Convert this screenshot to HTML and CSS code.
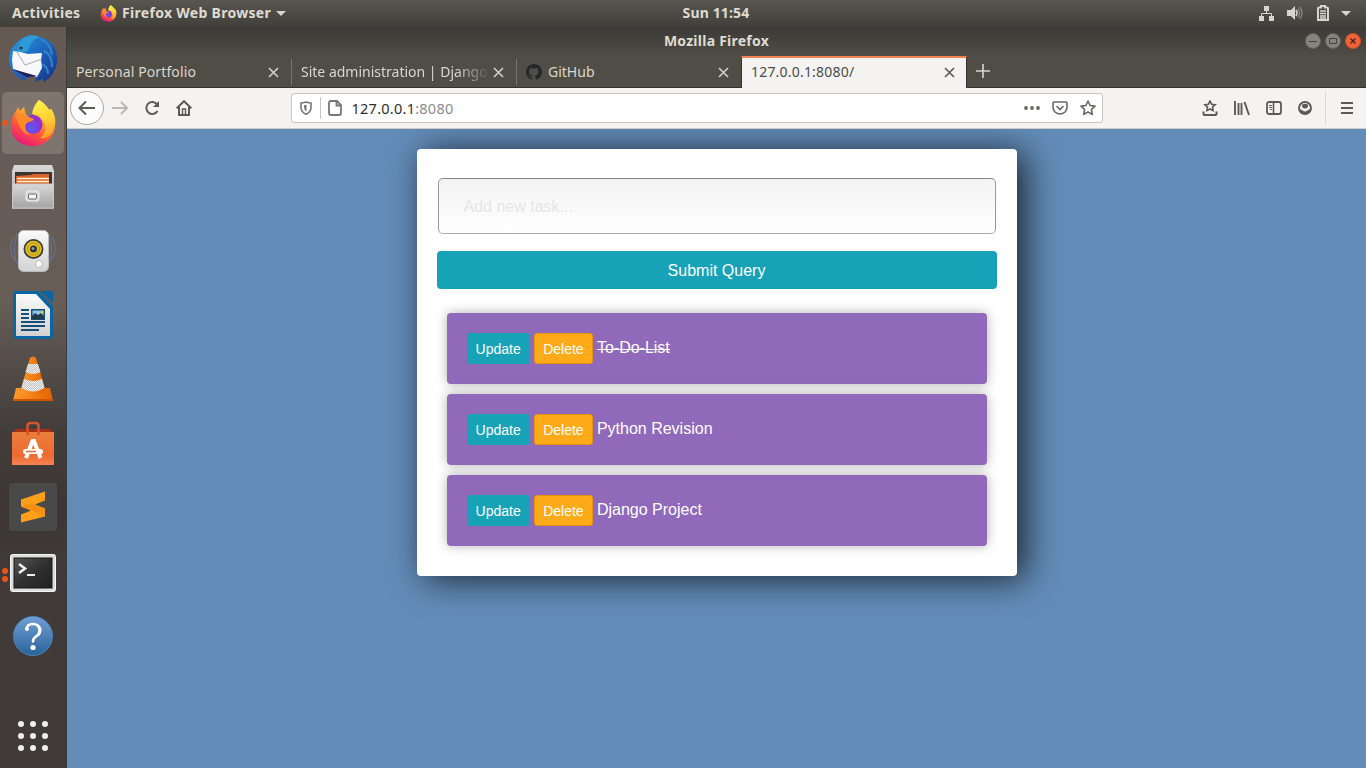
FILE: index.html
```html
<!DOCTYPE html>
<html lang="en">
<head>
<meta charset="utf-8">
<title>To-Do List</title>
<link rel="stylesheet" href="styles.css">
</head>
<body>
<svg class="defs" width="0" height="0">
  <defs>
    <linearGradient id="flame" x1=".8" y1="0" x2=".3" y2="1"><stop offset="0" stop-color="#fff44f"/><stop offset=".35" stop-color="#ffb52a"/><stop offset=".65" stop-color="#ff5a36"/><stop offset="1" stop-color="#e9157c"/></linearGradient>
    <linearGradient id="tail" x1=".4" y1="0" x2=".6" y2="1"><stop offset="0" stop-color="#fff04c"/><stop offset=".5" stop-color="#ffd335"/><stop offset="1" stop-color="#ff9a2a"/></linearGradient>
    <radialGradient id="globe" cx=".4" cy=".7"><stop offset="0" stop-color="#5a5cf0"/><stop offset="1" stop-color="#8b32d8"/></radialGradient>
    <linearGradient id="bird" x1="0" y1="0" x2="1" y2="1"><stop offset="0" stop-color="#2ba0e0"/><stop offset=".5" stop-color="#1c67be"/><stop offset="1" stop-color="#172c82"/></linearGradient>
    <linearGradient id="metal" x2="0" y2="1"><stop stop-color="#d8d8d8"/><stop offset="1" stop-color="#a4a4a4"/></linearGradient>
    <linearGradient id="white" x2="0" y2="1"><stop stop-color="#fafafa"/><stop offset="1" stop-color="#d2d2d2"/></linearGradient>
    <linearGradient id="cone" x2="1" y2="0"><stop stop-color="#ff9a2c"/><stop offset="1" stop-color="#e56400"/></linearGradient>
    <linearGradient id="bag" x2="0" y2="1"><stop stop-color="#eb7e3d"/><stop offset=".7" stop-color="#ee6a30"/><stop offset="1" stop-color="#f48355"/></linearGradient>
    <linearGradient id="screen" x2="1" y2="1"><stop stop-color="#555"/><stop offset=".5" stop-color="#303030"/><stop offset="1" stop-color="#202020"/></linearGradient>
    <linearGradient id="help" x2="0" y2="1"><stop stop-color="#729fd6"/><stop offset="1" stop-color="#286399"/></linearGradient>
    <pattern id="check" width="2" height="2" patternUnits="userSpaceOnUse"><rect width="2" height="2" fill="#eee"/><path d="M0 0h1v1H0zM1 1h1v1H1z" fill="#c4c4c4"/></pattern>
    <symbol id="firefox" viewBox="0 0 46 48">
      <path d="M29 1c5 3 8 6 10 10l2-1c4 5 5 11 4 17-1 12-10 20-22 20C10 47 1 39 1 27c0-6 2-11 5-15l2-4 2 4 4-4 2 8 7 3c1-8 1-12 6-18z" fill="url(#flame)"/>
      <path d="M22 15c1-6 3-10 7-14 5 3 8 6 10 10l2-1c5 8 5 18-1 26-3 3-8 4-10 3 6-4 7-12 3-18-3-4-6-6-11-6z" fill="url(#tail)"/>
      <circle cx="23" cy="25.500" r="9.500" fill="url(#globe)"/>
      <path d="M6 17c4-2 9-1 13 1l5 2c-1 3-6 2-8 5-2 4 0 8 5 11-8 0-13-9-15-19z" fill="#ff8a28"/>
    </symbol>
  </defs>
</svg>

<header class="topbar">
  <span class="activities">Activities</span>
  <span class="appmenu"><svg width="17" height="17"><use href="#firefox"/></svg><span class="appname">Firefox Web Browser</span><i class="caret"></i></span>
  <span class="clock">Sun 11:54</span>
  <span class="tray">
    <svg width="16" height="16" fill="#d4d4d0"><path d="M5 1h5v5H5zM0 11h5v5H0zM10 11h5v5h-5z"/><path d="M7.500 6v3M2.500 11V8.500h10V11" fill="none" stroke="#d4d4d0"/></svg>
    <svg width="16" height="16" fill="#d4d4d0"><path d="M0 5h4l4-4v14l-4-4H0z"/><path d="M9 5q2 3 0 6" fill="none" stroke="#d4d4d0" stroke-width="1.500"/><path d="M11 3.500q3 4.500 0 9M13 2q4 6 0 12" fill="none" stroke="#84837c" stroke-width="1.400"/></svg>
    <svg width="12" height="16"><path d="M4 1h4v1.500h2q1 0 1 1V15H1V3.500q0-1 1-1h2z" fill="none" stroke="#d4d4d0" stroke-width="2"/><path d="M3 6h6M3 8.500h6M3 11h6M3 13h6" stroke="#d4d4d0" stroke-width="1.300"/></svg>
    <i class="caret"></i>
  </span>
</header>

<div class="desktop">
  <nav class="dock">
    <div class="slot"><svg width="50" height="50" viewBox="0 0 50 50"><path d="M15 4Q22-1 32 3Q47 6 49 23Q50 39 36 48l-1-3-8 3 2-6-11 2-1 3Q3 41 1 27 0 13 15 4z" fill="url(#bird)"/><path d="M15 4Q22-1 32 3 23 5 20 17L11 19 9 14z" fill="#2d9bd6"/><path d="M33 5q10 5 11 16M36 17q8 3 8 16M33 30q7 2 7 10" fill="none" stroke="#3584c8" stroke-width="2"/><path d="M5 17l7 1 8 2 14-1-1 7 1 8-5 9-24-8-1-9z" fill="#f8f8fa"/><path d="M9 18l8 13 17-6" fill="none" stroke="#aaa"/><path d="M4 35l25 7-10 1z" fill="#272058"/><circle cx="13" cy="14" r="1.600" fill="#37322b"/></svg></div>
    <div class="slot active"><i class="run"></i><svg width="46" height="48"><use href="#firefox"/></svg></div>
    <div class="slot"><svg width="44" height="46"><path d="M3 1h38l2 6v38H1V7z" fill="url(#metal)"/><path d="M4 8h37v13H4z" fill="#3d3430"/><path d="M5 12l15-1 2-1h16v12H5z" fill="#d9652b"/><path d="M6 14.500h32M6 17.500h32" stroke="#fff1cf" stroke-width="1.500"/><path d="M1.500 20h41v24h-41z" fill="url(#metal)" stroke="#c9c9c9"/><rect x="15" y="27" width="13" height="10" rx="2" fill="#d8d8d8" stroke="#eee"/><rect x="17.500" y="30" width="8" height="5" rx="1" fill="#f8f8f8" stroke="#666"/></svg></div>
    <div class="slot"><svg width="48" height="44"><path d="M5 8q-7 12 1 24M8 5q-5 15 0 30M43 8q7 12-1 24M40 5q5 15 0 30" fill="none" stroke="#67708a" stroke-width="1.200"/><rect x="9.500" y="1.500" width="30" height="41" rx="5" fill="url(#white)" stroke="#bbb"/><circle cx="24.500" cy="20" r="10" fill="#3a3c3e"/><circle cx="24.500" cy="20" r="8.300" fill="#e0bd20"/><circle cx="24.500" cy="20" r="6" fill="none" stroke="#b49310"/><circle cx="24.500" cy="20" r="3.500" fill="#34383b"/><circle cx="24" cy="19.500" r="1.300" fill="#aaa"/><circle cx="30" cy="35" r="3.500" fill="#fff" stroke="#bbb"/></svg></div>
    <div class="slot"><svg width="42" height="50"><path d="M4 1h22l15 15v29q0 4-4 4H5q-4 0-4-4V4q0-3 3-3z" fill="#0966a0"/><path d="M4 4h20l14 15v27H4z" fill="url(#white)"/><path d="M28 1h12q1 0 1 1v11z" fill="#0966a0"/><path d="M9 20h8M9 24h8M9 28h8M9 32h24M9 36h24M9 40h18" stroke="#174e78" stroke-width="2"/><path d="M19 19h14v11H19z" fill="#174e78"/><path d="M20.500 20.500h11v8h-11z" fill="#8fc5e7"/><path d="M20 29v-3l3-3 3 2 3-2 3 3v3z" fill="#243b49"/><circle cx="30" cy="22" r="1.500" fill="#f2c43b"/></svg></div>
    <div class="slot"><svg width="42" height="48"><path d="M4 33h34l3 13H1z" fill="url(#cone)"/><path d="M1 44h40v2H1z" fill="#d35300"/><path d="M18 3q3-3 6 0l10 34q-13 8-26 0z" fill="url(#cone)"/><path d="M16 9h10l2.500 8q-7.500 4-15 0zM12 24q9 4 18 0l2.500 9q-11.500 7-23 0z" fill="url(#check)"/></svg></div>
    <div class="slot"><svg width="42" height="45"><path d="M4 8h34l4 5H0z" fill="#a72f16"/><path d="M0 11h42v33H0z" fill="url(#bag)"/><path d="M15.500 14V5q0-3 3-3h5q3 0 3 3v9" fill="none" stroke="#d3552f" stroke-width="2.500"/><path d="M14 37l6.500-17h1.500L28.500 37" fill="none" stroke="#fff" stroke-width="4"/><rect x="11" y="28" width="20" height="5" rx="2.500" fill="#fff"/><path d="M14 30.500h10" stroke="#e86a30" stroke-width="1.500"/></svg></div>
    <div class="slot"><svg width="48" height="48"><rect width="48" height="48" rx="3" fill="#494949"/><path d="M12 16.500l24-8v9l-10 4 10 4v8l-24 6v-8l10-4-10-4z" fill="#ff9f1a"/><path d="M12 23.500l10-3 14 5v7z" fill="#f78f12"/></svg></div>
    <div class="slot low"><i class="run two"></i><svg width="46" height="38"><rect x=".5" y=".5" width="45" height="37" rx="2" fill="#ddd" stroke="#f4f4f4"/><rect x="4" y="4" width="38" height="30" fill="url(#screen)" stroke="#151515"/><path d="M9 10l6 4.500-6 4.500" fill="none" stroke="#eee" stroke-width="2.600"/><path d="M17 21h8" stroke="#eee" stroke-width="2"/></svg></div>
    <div class="slot low2"><svg width="42" height="42"><circle cx="21" cy="21" r="19.500" fill="url(#help)" stroke="#4a85bc"/><path d="M14.500 14q.5-5 6.500-5t7 6q0 4-4 6.500-3 2-3 5" fill="none" stroke="#fff" stroke-width="2.600" stroke-linecap="round"/><circle cx="15" cy="14" r="2" fill="#fff"/><path d="M26 11q4 4 0 9" fill="none" stroke="#fff" stroke-width="3"/><circle cx="21" cy="32.500" r="2.600" fill="#fff"/></svg></div>
    <div class="slot apps"><svg width="32" height="32" fill="#f1f0ef"><circle cx="4" cy="4" r="3"/><circle cx="16" cy="4" r="3"/><circle cx="28" cy="4" r="3"/><circle cx="4" cy="16" r="3"/><circle cx="16" cy="16" r="3"/><circle cx="28" cy="16" r="3"/><circle cx="4" cy="28" r="3"/><circle cx="16" cy="28" r="3"/><circle cx="28" cy="28" r="3"/></svg></div>
  </nav>

  <main class="window">
    <div class="titlebar">
      <span class="title">Mozilla Firefox</span>
      <span class="controls">
        <svg width="16" height="16"><circle cx="8" cy="8" r="7.500" fill="#85837b" stroke="#666159"/><path d="M4 8.500h8" stroke="#45423c"/></svg>
        <svg width="16" height="16"><circle cx="8" cy="8" r="7.500" fill="#85837b" stroke="#666159"/><path d="M4.500 5.500h7v5h-7z" fill="none" stroke="#45423c"/></svg>
        <svg width="16" height="16"><circle cx="8" cy="8" r="7.500" fill="#ec6438" stroke="#d94d22"/><path d="M5.500 5.500l5 5M10.500 5.500l-5 5" stroke="#4c2012" stroke-width="1.300"/></svg>
      </span>
    </div>
    <div class="tabs">
      <div class="tab first"><span class="label t1">Personal Portfolio</span><svg class="close" width="11" height="11"><path d="M1 1l9 9M10 1l-9 9"/></svg></div>
      <div class="tab"><span class="label fade">Site administration | Django</span><svg class="close" width="11" height="11"><path d="M1 1l9 9M10 1l-9 9"/></svg></div>
      <div class="tab"><svg class="github" width="16" height="16" viewBox="0 0 16 16"><path d="M8 0C3.580 0 0 3.580 0 8c0 3.540 2.290 6.530 5.470 7.590.4.070.55-.17.55-.38v-1.490c-2.010.37-2.530-.49-2.690-.94-.36-.91-.84-1.230-.84-1.230-.68-.46.060-.45.060-.45.750.050 1.150.77 1.150.77.67 1.150 1.760.82 2.190.63.070-.49.260-.82.480-1.010-1.670-.19-3.430-.84-3.430-3.730 0-.83.290-1.500.77-2.030-.08-.19-.33-.96.070-2 0 0 .63-.2 2.060.77a7.200 7.200 0 013.750 0c1.430-.97 2.060-.77 2.060-.77.4 1.040.15 1.810.07 2 .48.530.77 1.200.77 2.030 0 2.900-1.770 3.540-3.450 3.730.27.23.51.68.51 1.380v2.220c0 .21.15.46.55.38A8 8 0 0016 8c0-4.420-3.580-8-8-8z" fill="#22272b"/></svg><span class="label">GitHub</span><svg class="close" width="11" height="11"><path d="M1 1l9 9M10 1l-9 9"/></svg></div>
      <div class="tab current"><span class="label t4">127.0.0.1:8080/</span><svg class="close" width="11" height="11"><path d="M1 1l9 9M10 1l-9 9"/></svg></div>
      <svg class="newtab" width="14" height="14"><path d="M7 0v14M0 7h14" stroke="#d8d6d0" stroke-width="1.600"/></svg>
    </div>
    <div class="toolbar">
      <span class="back"><svg width="18" height="16"><path d="M17 8H2M8 1.500L1.500 8 8 14.500" fill="none" stroke="#5b5a58" stroke-width="2"/></svg></span>
      <svg class="forward" width="16" height="14"><path d="M0 7h15M9 1l6 6-6 6" fill="none" stroke="#b9b8b6" stroke-width="2"/></svg>
      <svg class="reload" width="16" height="16"><path d="M13.200 4.500A6 6 0 1 0 13.500 11" fill="none" stroke="#5b5a58" stroke-width="2"/><path d="M15 1v6H9z" fill="#5b5a58"/></svg>
      <svg class="home" width="16" height="16"><path d="M.7 8.200L8 1.200l7.300 7M3 7v8h10V7" fill="none" stroke="#5b5a58" stroke-width="2"/><path d="M6.500 15V9h3v6" fill="none" stroke="#5b5a58" stroke-width="1.400"/></svg>
      <div class="urlbar">
        <svg width="12" height="14"><path d="M6 1q2.500 1 5 1v4q0 5-5 7.300Q1 11 1 6V2q2.500 0 5-1z" fill="none" stroke="#777" stroke-width="1.600"/><path d="M6.500 4v6.500Q4 9 4 6V4z" fill="#777"/></svg>
        <i class="line"></i>
        <svg width="14" height="16"><path d="M3 1h6l4 4v8q0 2-2 2H3q-2 0-2-2V3q0-2 2-2zM8.500 1v4.500H13" fill="none" stroke="#777" stroke-width="1.800"/></svg>
        <span class="url">127.0.0.1<em>:8080</em></span>
        <span class="urlicons">
          <svg width="16" height="4" fill="#686765"><circle cx="2" cy="2" r="1.900"/><circle cx="8" cy="2" r="1.900"/><circle cx="14" cy="2" r="1.900"/></svg>
          <svg width="16" height="14" fill="none" stroke="#686765" stroke-width="1.600"><path d="M2 1h12q1 0 1 1v4q0 3-2 5-5 4-10 0-2-2-2-5V2q0-1 1-1z"/><path d="M4.500 5L8 8.500 11.500 5"/></svg>
          <svg width="16" height="16"><path d="M8 1l2.100 4.500 4.900.6-3.600 3.400.9 4.900L8 12l-4.300 2.400.9-4.900L1 6.100l4.900-.6z" fill="none" stroke="#686765" stroke-width="1.600" stroke-linejoin="round"/></svg>
        </span>
      </div>
      <div class="tools">
        <svg width="16" height="16"><path d="M8 1l1.600 3.200 3.500.5-2.600 2.400.6 3.500L8 9l-3.100 1.600.6-3.500-2.600-2.400 3.500-.5z" fill="none" stroke="#5b5a58" stroke-width="1.600"/><path d="M1.500 11.500V14q0 1 1 1h11q1 0 1-1v-2.500" fill="none" stroke="#5b5a58" stroke-width="2"/></svg>
        <svg width="16" height="15" stroke="#5b5a58" stroke-width="1.900"><path d="M1 0v14M4.500 2v12M7.500 2v12M10.500 1l4.500 13"/></svg>
        <svg width="16" height="14" fill="none" stroke="#5b5a58"><rect x="1" y="1" width="14" height="12" rx="2" stroke-width="1.800"/><path d="M7.500 1v12" stroke-width="1.600"/><path d="M3 4.500h3M3 6.500h3M4 8.500h2"/></svg>
        <svg width="14" height="14"><circle cx="7" cy="7" r="6" fill="none" stroke="#5b5a58" stroke-width="1.900"/><path d="M4 4.500q0-1.700 3-1.700t3 1.700q0 3-3 3t-3-3zM1.500 8Q3 8 4.500 9.500q2.500 2 5 0Q11 8 12.500 8q-1 5-5.500 5T1.500 8z" fill="#5b5a58"/></svg>
      </div>
      <i class="divider"></i>
      <svg class="burger" width="12" height="12" stroke="#5b5a58" stroke-width="2"><path d="M0 1h12M0 6h12M0 11h12"/></svg>
    </div>
    <section class="page">
      <div class="card">
        <input class="task-input" type="text" placeholder="Add new task...">
        <button class="submit">Submit Query</button>
        <div class="list">
          <div class="item"><a class="btn update">Update</a><a class="btn delete">Delete</a><span class="done">To-Do-List</span></div>
          <div class="item"><a class="btn update">Update</a><a class="btn delete">Delete</a><span>Python Revision</span></div>
          <div class="item"><a class="btn update">Update</a><a class="btn delete">Delete</a><span>Django Project</span></div>
        </div>
      </div>
    </section>
  </main>
</div>
</body>
</html>
```

FILE: styles.css
```css
* { box-sizing: border-box; }
body { margin: 0; width: 1366px; height: 768px; overflow: hidden; font-family: "Noto Sans", "Open Sans", sans-serif; font-size: 14px; }
svg { display: block; flex: none; }
.defs { position: absolute; }

/* system bar */
.topbar { height: 27px; display: grid; grid-template-columns: 92px 1fr auto 1fr; align-items: center; background: linear-gradient(#59564f, #403f3a); color: #dfdbd2; font-weight: 700; line-height: 25px; white-space: nowrap; }
.activities { padding-left: 12px; letter-spacing: .35px; }
.appmenu { display: flex; align-items: center; padding-left: 8px; }
.appname { margin-left: 5px; letter-spacing: .3px; }
.activities, .appname, .clock { height: 27px; }
.clock { margin-left: -26px; letter-spacing: .15px; }
.caret { border: 5px solid transparent; border-top-color: #d4d4d0; border-bottom: 0; margin-left: 5px; }
.tray { display: flex; align-items: center; justify-content: flex-end; padding-right: 15px; }
.tray svg { margin-top: -1px; }
.tray svg:nth-child(2) { margin-left: 12px; }
.tray svg:nth-child(3) { margin-left: 14px; }
.tray .caret { margin-left: 12px; }

/* launcher */
.desktop { display: flex; height: 741px; }
.dock { width: 67px; flex: none; display: flex; flex-direction: column; background: linear-gradient(#655954 0, #675d57 280px, #5b5450 310px, #433e3c 400px, #3c3735 480px, #403a38 560px, #403a38 100%); border-right: 1px solid #3d3937; }
.slot { height: 64px; flex: none; display: flex; align-items: center; justify-content: center; position: relative; }
.active { height: 62px; width: 62px; margin: 1px 0 1px 2px; background: #80746f; border-radius: 5px; }
.low { padding-top: 4px; }
.low2 { padding-top: 2px; }
.apps { margin-top: auto; }
.run { position: absolute; left: 0; top: 28px; width: 6px; height: 6px; border-radius: 50%; background: #e95420; }
.two { left: 2px; top: 29px; box-shadow: 0 8px #e95420; }

/* browser chrome */
.window { flex: 1; display: flex; flex-direction: column; min-width: 0; }
.titlebar { height: 28px; display: grid; grid-template-columns: 1fr auto 1fr; align-items: center; background: linear-gradient(#3b3a36, #4f4c45); color: #dfdbd2; font-weight: 700; }
.title { grid-column: 2; letter-spacing: .25px; padding-bottom: 2px; }
.controls { display: flex; gap: 4px; justify-content: flex-end; padding-right: 5px; }
.tabs { height: 33px; display: flex; background: #504d46; border-bottom: 1px solid #35332f; color: #d9d6ce; }
.tab { width: 225px; display: flex; align-items: center; padding: 2px 12px 0 9px; }
.tab.first { width: 224px; }
.tab + .tab:not(.current) { border-left: 1px solid #77746c; border-image: linear-gradient(transparent 5px, #77746c 5px, #77746c 29px, transparent 29px) 1; }
.close { margin-left: auto; stroke: #cfccc4; stroke-width: 1.700; }
.label { white-space: nowrap; line-height: 20px; }
.t1 { letter-spacing: .12px; }
.t4 { letter-spacing: .2px; }
.fade { width: 186px; overflow: hidden; -webkit-mask-image: linear-gradient(90deg, #000 155px, transparent 190px); mask-image: linear-gradient(90deg, #000 155px, transparent 190px); }
.github { margin-right: 6px; }
.tab.current { width: 226px; height: 32px; margin-top: 1px; background: #f4f3f1; color: #4c4b48; border-top: 2px solid #f37f52; border-right: 1px solid #35332f; border-left: 1px solid #35332f; padding: 0 11px 2px 9px; }
.current .close { stroke: #5e5d5a; }
.newtab { margin: 9px 0 0 9px; }
.toolbar { height: 41px; display: flex; align-items: center; background: #f4f3f1; border-bottom: 1px solid #cfccc8; }
.back { width: 34px; height: 34px; margin-left: 3px; border: 1px solid #aaa9a7; border-radius: 50%; background: #fcfcfc; display: flex; align-items: center; justify-content: center; }
.forward { margin-left: 8px; }
.reload { margin-left: 16px; }
.home { margin-left: 16px; }
.urlbar { width: 812px; height: 30px; margin-left: 99px; border: 1px solid #c8c6c3; border-radius: 3px; background: #fff; display: flex; align-items: center; padding: 0 6px 0 8px; }
.line { width: 1px; height: 22px; background: #c8c6c3; margin: 0 7px 0 8px; }
.url { margin-left: 9.500px; padding-bottom: 1px; color: #2e2e2e; font-size: 14.5px; letter-spacing: .25px; line-height: 20px; }
.url em { font-style: normal; color: #8c8c8c; }
.urlicons { margin-left: auto; display: flex; align-items: center; gap: 12px; }
.tools { display: flex; align-items: center; gap: 16px; margin-left: 99px; }
.divider { width: 1px; height: 34px; background: #dad8d5; margin-left: 13px; }
.burger { margin-left: 15px; }

/* to-do page */
.page { flex: 1; background: #638cb8; padding-top: 20px; font: 16px/24px "Liberation Sans", Arial, sans-serif; overflow: hidden; }
.card { width: 600px; height: 427px; margin: 0 auto 0 350px; background: #fff; border-radius: 4px; padding: 29px 20px 30px; box-shadow: 8px 3px 35px rgba(0, 0, 0, .75); }
.task-input { display: block; width: 558px; height: 56px; margin: 0 1px 17px; padding: 2px 25px 0 24.5px; border: 1px solid #999; border-top-color: #888; border-bottom-color: #aaa; border-radius: 5px; background: linear-gradient(#f3f3f3, #fff); font: inherit; }
.task-input::placeholder { color: #e6e6e6; opacity: 1; }
.submit { display: block; width: 560px; height: 38px; border: 0; border-radius: 4px; background: #17a2b8; color: #fff; font: inherit; padding: 2px 1px 0 0; }
.list { display: flex; flex-direction: column; gap: 10px; padding: 24px 10px 0; }
.item { height: 71px; padding: 20px; display: flex; gap: 4px; background: #9069bb; color: #fff; border-radius: 4px; box-shadow: 0 0 12px rgba(0, 0, 0, .3); }
.item span { line-height: 29px; margin-left: .3px; }
.item .done { height: 29px; background: linear-gradient(#fff, #fff) 0 16px / 100% 1px no-repeat; }
.btn { height: 31px; padding: 4px 8px; border: 1px solid #17a2b8; border-radius: 3px; background: #17a2b8; font-size: 14px; line-height: 23px; }
.update { padding: 4px 8.4px 4px 7.6px; }
.delete { background: #ffab19; border-color: #e6920a; }
```
